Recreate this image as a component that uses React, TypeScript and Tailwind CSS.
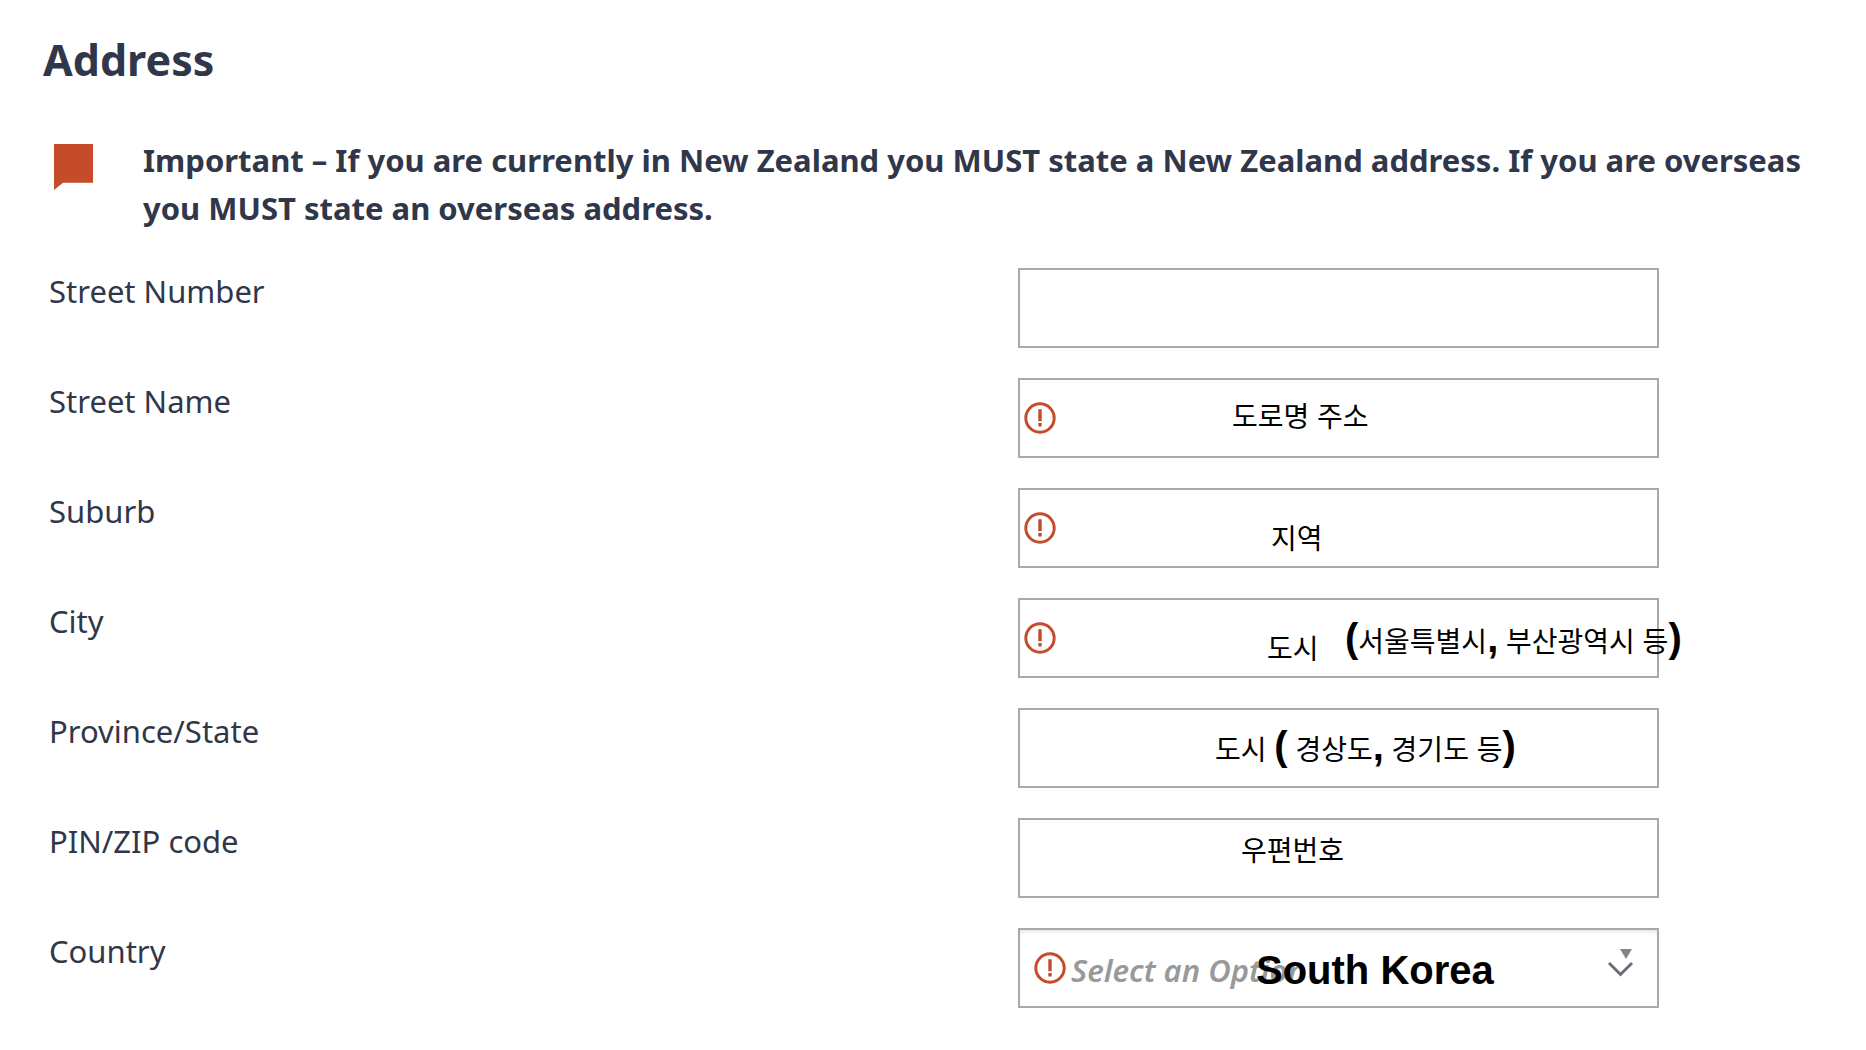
import React from 'react';

interface Note {
  text: React.ReactNode;
  className: string;
}

interface Field {
  id: string;
  label: string;
  required?: boolean;
  notes: Note[];
}

// punctuation in the notes is set heavier and larger than the Korean words
const Mark = ({ children }: { children: React.ReactNode }) => (
  <span className="text-[40px] font-bold">{children}</span>
);

const fields: Field[] = [
  { id: 'street-number', label: 'Street Number', notes: [] },
  {
    id: 'street-name',
    label: 'Street Name',
    required: true,
    notes: [{ text: '도로명 주소', className: 'left-[214px] top-4' }],
  },
  {
    id: 'suburb',
    label: 'Suburb',
    required: true,
    notes: [{ text: '지역', className: 'left-[253px] top-7' }],
  },
  {
    id: 'city',
    label: 'City',
    required: true,
    notes: [
      { text: '도시', className: 'left-[249px] top-7' },
      {
        text: <><Mark>(</Mark>서울특별시<Mark>,</Mark> 부산광역시 등<Mark>)</Mark></>,
        className: 'left-[327px] top-4',
      },
    ],
  },
  {
    id: 'province',
    label: 'Province/State',
    notes: [
      {
        text: <>도시 <Mark>(</Mark> 경상도<Mark>,</Mark> 경기도 등<Mark>)</Mark></>,
        className: 'left-[197px] top-3.5',
      },
    ],
  },
  {
    id: 'zip',
    label: 'PIN/ZIP code',
    notes: [{ text: '우편번호', className: 'left-[223px] top-2.5' }],
  },
];

const AlertIcon = ({ className }: { className: string }) => (
  <svg className={`pointer-events-none absolute top-6 size-8 ${className}`} viewBox="0 0 32 32" fill="none" aria-hidden="true">
    <circle cx="16" cy="16" r="14.2" stroke="#c44c2b" strokeWidth="3" />
    <path d="M14.3 7.2h3.4v12h-3.4zM14.3 21h3.4v3.6h-3.4z" fill="#c44c2b" />
  </svg>
);

const rowClass = 'grid grid-cols-[969fr_641fr_207fr] items-start';
const noteClass = "pointer-events-none absolute whitespace-nowrap font-['Liberation_Sans','Noto_Sans_CJK_KR',sans-serif] leading-[48px] text-black";

export default function App() {
  return (
    <main className="min-h-screen bg-white pt-[30px] pb-10 font-['Noto_Sans','Noto_Sans_CJK_KR',sans-serif] text-[#31374a]">
      <h1 className="pl-[43px] text-[43px] leading-[60px] font-bold">Address</h1>

      <div className="mt-[46px] flex items-start pl-[54px]">
        <svg className="mt-2 h-[46px] w-[39px] shrink-0" viewBox="0 0 39 46" aria-hidden="true">
          <path d="M0 0h39v38.7H9L0 46z" fill="#c44c2b" />
        </svg>
        <p className="ml-[50px] pr-10 text-[31px] leading-[48px] font-bold">
          Important – If you are currently in New Zealand you MUST state a New Zealand address. If you are overseas you MUST state an overseas address.
        </p>
      </div>

      <form className="mt-9 flex flex-col gap-[30px] pl-[49px] text-[31px] leading-[46px]">
        {fields.map((field) => (
          <div key={field.id} className={rowClass}>
            <label htmlFor={field.id}>{field.label}</label>
            <div className="relative">
              <input
                id={field.id}
                type="text"
                className="block h-20 w-full border-2 border-[#a9a9a9] bg-white pl-12 outline-none"
              />
              {field.required && <AlertIcon className="left-[6px]" />}
              {field.notes.map((note) => (
                <span key={note.className} className={`${noteClass} text-[28px] ${note.className}`}>
                  {note.text}
                </span>
              ))}
            </div>
          </div>
        ))}

        <div className={rowClass}>
          <label htmlFor="country">Country</label>
          <div className="relative">
            <select
              id="country"
              defaultValue=""
              className="block h-20 w-full appearance-none border-2 border-[#a9a9a9] bg-white pt-1 pl-[51px] font-semibold text-[#999999] italic shadow-[inset_0_4px_4px_-2px_#e5e5e5] outline-none"
            >
              <option value="">Select an Option</option>
            </select>
            <AlertIcon className="left-4" />
            <svg className="pointer-events-none absolute top-5 right-6 h-8 w-7" viewBox="0 0 28 32" fill="none" aria-hidden="true">
              <path d="M13 1h12l-6 10z" fill="#858585" />
              <path d="M2 15l11.5 11.5L25 15" stroke="#6c6c7a" strokeWidth="3" />
            </svg>
            <span className={`${noteClass} top-[18px] left-[238px] text-[40px] font-bold`}>South Korea</span>
          </div>
        </div>
      </form>
    </main>
  );
}
